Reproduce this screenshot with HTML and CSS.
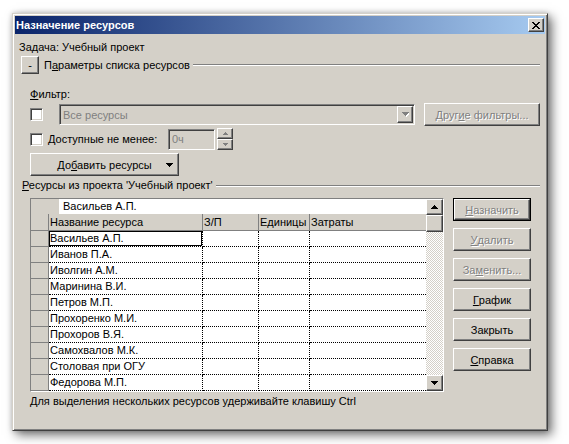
FILE: index.html
```html
<!DOCTYPE html>
<html lang="ru">
<head>
<meta charset="utf-8">
<title>Назначение ресурсов</title>
<link rel="stylesheet" href="styles.css">
</head>
<body>
<div class="stage">
  <div class="window">
    <div class="titlebar">
      <span class="title">Назначение ресурсов</span>
      <span class="close raised">
        <svg width="8" height="7" viewBox="0 0 8 7" shape-rendering="crispEdges"><path fill="#000" d="M0 0h2v1H0z M6 0h2v1H6z M1 1h2v1H1z M5 1h2v1H5z M2 2h4v1H2z M3 3h2v1H3z M2 4h4v1H2z M1 5h2v1H1z M5 5h2v1H5z M0 6h2v1H0z M6 6h2v1H6z"/></svg>
      </span>
    </div>
    <div class="client">
      <div class="task">Задача: Учебный проект</div>

      <div class="params">
        <div class="raised minus">-</div>
        <span class="plabel">П<u>а</u>раметры списка ресурсов</span>
        <span class="groove"></span>
      </div>

      <div class="flabel"><u>Ф</u>ильтр:</div>

      <div class="filter">
        <span class="chk"></span>
        <div class="combo sunken">
          <span class="ctext">Все ресурсы</span>
          <span class="cbtn raised">
            <svg width="7" height="5" viewBox="0 0 7 5" shape-rendering="crispEdges"><path fill="#fff" d="M1 1h7v1H1z M2 2h5v1H2z M3 3h3v1H3z M4 4h1v1H4z"/><path fill="#808080" d="M0 0h7v1H0z M1 1h5v1H1z M2 2h3v1H2z M3 3h1v1H3z"/></svg>
          </span>
        </div>
        <div class="raised btn dis other">Друг<u>и</u>е фильтры...</div>
      </div>

      <div class="avail">
        <span class="chk"></span>
        <span class="alabel"><u>Д</u>оступные не менее:</span>
        <span class="hours sunken">0ч</span>
        <span class="spin">
          <span class="sp raised"><svg width="5" height="3" viewBox="0 0 5 3" shape-rendering="crispEdges"><path fill="#808080" d="M2 0h1v1H2z M1 1h3v1H1z M0 2h5v1H0z"/></svg></span>
          <span class="sp raised"><svg width="5" height="3" viewBox="0 0 5 3" shape-rendering="crispEdges"><path fill="#808080" d="M0 0h5v1H0z M1 1h3v1H1z M2 2h1v1H2z"/></svg></span>
        </span>
      </div>

      <div class="raised addbtn">
        <span></span>
        <span class="addtext">До<u>б</u>авить ресурсы</span>
        <span class="addarrow"><svg width="7" height="4" viewBox="0 0 7 4" shape-rendering="crispEdges"><path fill="#000" d="M0 0h7v1H0z M1 1h5v1H1z M2 2h3v1H2z M3 3h1v1H3z"/></svg></span>
      </div>

      <div class="reslabel">
        <span><u>Р</u>есурсы из проекта 'Учебный проект'</span>
        <span class="groove"></span>
      </div>

      <div class="main">
        <div class="grid">
          <div class="table">
            <div class="editrow"><span class="egrey"></span><span class="efield">Васильев А.П.</span></div>
            <div class="hrow">
              <span class="rh"></span><span class="hc">Название ресурса</span><span class="hc">З/П</span><span class="hc">Единицы</span><span class="hc last">Затраты</span>
            </div>
            <div class="drow"><span class="rh"></span><span class="dc sel">Васильев А.П.</span><span class="dc"></span><span class="dc"></span><span class="dc last"></span></div>
            <div class="drow"><span class="rh"></span><span class="dc">Иванов П.А.</span><span class="dc"></span><span class="dc"></span><span class="dc last"></span></div>
            <div class="drow"><span class="rh"></span><span class="dc">Иволгин А.М.</span><span class="dc"></span><span class="dc"></span><span class="dc last"></span></div>
            <div class="drow"><span class="rh"></span><span class="dc">Маринина В.И.</span><span class="dc"></span><span class="dc"></span><span class="dc last"></span></div>
            <div class="drow"><span class="rh"></span><span class="dc">Петров М.П.</span><span class="dc"></span><span class="dc"></span><span class="dc last"></span></div>
            <div class="drow"><span class="rh"></span><span class="dc">Прохоренко М.И.</span><span class="dc"></span><span class="dc"></span><span class="dc last"></span></div>
            <div class="drow"><span class="rh"></span><span class="dc">Прохоров В.Я.</span><span class="dc"></span><span class="dc"></span><span class="dc last"></span></div>
            <div class="drow"><span class="rh"></span><span class="dc">Самохвалов М.К.</span><span class="dc"></span><span class="dc"></span><span class="dc last"></span></div>
            <div class="drow"><span class="rh"></span><span class="dc">Столовая при ОГУ</span><span class="dc"></span><span class="dc"></span><span class="dc last"></span></div>
            <div class="drow"><span class="rh"></span><span class="dc">Федорова М.П.</span><span class="dc"></span><span class="dc"></span><span class="dc last"></span></div>
          </div>
          <div class="vscroll">
            <span class="sbtn raised"><svg width="7" height="4" viewBox="0 0 7 4" shape-rendering="crispEdges"><path fill="#000" d="M3 0h1v1H3z M2 1h3v1H2z M1 2h5v1H1z M0 3h7v1H0z"/></svg></span>
            <span class="thumb raised"></span>
            <span class="track"></span>
            <span class="sbtn raised"><svg width="7" height="4" viewBox="0 0 7 4" shape-rendering="crispEdges"><path fill="#000" d="M0 0h7v1H0z M1 1h5v1H1z M2 2h3v1H2z M3 3h1v1H3z"/></svg></span>
          </div>
        </div>
        <div class="side">
          <div class="defbtn"><div class="raised btn dis"><u>Н</u>азначить</div></div>
          <div class="raised btn dis"><u>У</u>далить</div>
          <div class="raised btn dis">За<u>м</u>енить...</div>
          <div class="raised btn"><u>Г</u>рафик</div>
          <div class="raised btn">Закрыть</div>
          <div class="raised btn"><u>С</u>правка</div>
        </div>
      </div>

      <div class="hint">Для выделения нескольких ресурсов удерживайте клавишу Ctrl</div>
    </div>
  </div>
</div>
</body>
</html>
```
FILE: styles.css
```css
* { box-sizing: border-box; }
html, body { margin: 0; padding: 0; }
body {
  background: #fff;
  width: 569px;
  height: 444px;
  overflow: hidden;
  font-family: "Liberation Sans", Arial, sans-serif;
  font-size: 11px;
  color: #000;
}
u { text-decoration: underline; text-underline-offset: 1px; }

.stage { padding: 13px 0 0 12px; }

.window {
  width: 536px;
  height: 418px;
  background: #d4d0c8;
  border: 1px solid;
  border-color: #d4d0c8 #404040 #404040 #d4d0c8;
  padding: 2px;
  box-shadow: inset 1px 1px 0 #fff, inset -1px -1px 0 #808080,
              4px 4px 10px rgba(0,0,0,.55), 0 0 5px rgba(0,0,0,.18);
}

.raised {
  background: #d4d0c8;
  border: 1px solid;
  border-color: #fff #404040 #404040 #fff;
  box-shadow: inset -1px -1px 0 #808080, inset 1px 1px 0 #d4d0c8;
}
.sunken {
  border: 1px solid;
  border-color: #808080 #fff #fff #808080;
  box-shadow: inset 1px 1px 0 #404040, inset -1px -1px 0 #d4d0c8;
}

.titlebar {
  height: 18px;
  background: linear-gradient(to right, #0a246a, #a6caf0);
  display: flex;
  align-items: center;
  justify-content: space-between;
  padding: 0 1px 0 1px;
}
.title { color: #fff; font-weight: bold; font-size: 11px; }
.close {
  width: 16px;
  height: 14px;
  display: flex;
  align-items: center;
  justify-content: center;
}

.task { margin: 7px 0 0 4px; height: 13px; line-height: 13px; }

.params {
  margin-top: 2px;
  height: 18px;
  display: flex;
  align-items: center;
}
.minus {
  margin-left: 6px;
  width: 18px;
  height: 18px;
  display: flex;
  align-items: center;
  justify-content: center;
  line-height: 1;
}
.plabel { margin-left: 5px; white-space: nowrap; }
.groove {
  flex: 1;
  height: 2px;
  border-top: 1px solid #808080;
  border-bottom: 1px solid #fff;
  margin: 0 5px 0 3px;
}

.flabel { margin: 14px 0 0 15px; height: 13px; line-height: 13px; }

.filter {
  margin-top: 2px;
  height: 23px;
  display: flex;
  align-items: center;
}
.chk {
  width: 13px;
  height: 13px;
  flex-shrink: 0;
  background: #fff;
  border: 1px solid;
  border-color: #808080 #fff #fff #808080;
  box-shadow: inset 1px 1px 0 #404040, inset -1px -1px 0 #d4d0c8;
  margin-left: 15px;
}
.combo {
  margin-left: 16px;
  width: 356px;
  height: 21px;
  background: #d4d0c8;
  display: flex;
  align-items: center;
  padding: 1px;
}
.ctext { flex: 1; color: #808080; padding-left: 2px; }
.cbtn {
  width: 16px;
  height: 17px;
  display: flex;
  align-items: center;
  justify-content: center;
}
.btn {
  display: flex;
  align-items: center;
  justify-content: center;
  height: 23px;
  white-space: nowrap;
}
.dis { color: #808080; text-shadow: 1px 1px 0 #fff; }
.other { margin-left: 9px; width: 116px; }

.avail {
  margin-top: 2px;
  height: 22px;
  display: flex;
  align-items: center;
}
.alabel { margin-left: 5px; width: 120px; flex-shrink: 0; white-space: nowrap; }
.hours {
  width: 47px;
  height: 21px;
  background: #d4d0c8;
  color: #808080;
  padding-left: 3px;
  line-height: 19px;
}
.spin {
  margin-left: 2px;
  width: 16px;
  height: 22px;
  display: flex;
  flex-direction: column;
}
.sp {
  flex: 1;
  display: flex;
  align-items: center;
  justify-content: center;
}

.addbtn {
  margin: 3px 0 0 15px;
  width: 149px;
  height: 23px;
  display: grid;
  grid-template-columns: 1fr auto 1fr;
  align-items: center;
}
.addtext { white-space: nowrap; }
.addarrow { justify-self: end; margin-right: 5px; display: flex; }

.reslabel {
  margin: 3px 0 0 7px;
  height: 13px;
  line-height: 13px;
  display: flex;
  align-items: center;
  white-space: nowrap;
}

.main {
  margin: 6px 0 0 15px;
  display: flex;
  gap: 9px;
}
.grid {
  width: 414px;
  height: 194px;
  border: 1px solid;
  border-color: #808080 #fff #fff #808080;
  display: flex;
}
.table { width: 395px; display: flex; flex-direction: column; }
.editrow { height: 15px; display: flex; background: #d4d0c8; }
.egrey { width: 28px; background: #d4d0c8; }
.efield { flex: 1; background: #fff; padding-left: 4px; line-height: 15px; }

.hrow, .drow {
  display: grid;
  grid-template-columns: 18px 154px 56px 51px 1fr;
  height: 16px;
}
.hrow { height: 17px; }
.rh {
  background: #d4d0c8;
  border-right: 1px solid #808080;
  border-bottom: 1px solid #808080;
}
.hc {
  background: #d4d0c8;
  border-right: 1px solid #808080;
  border-bottom: 1px solid #808080;
  padding-left: 1px;
  line-height: 16px;
  white-space: nowrap;
  overflow: hidden;
}
.dc {
  background: #fff;
  border-right: 1px dotted #000;
  border-bottom: 1px dotted #000;
  padding-left: 1px;
  line-height: 15px;
  white-space: nowrap;
  overflow: hidden;
}
.last { border-right: none; }
.sel { box-shadow: inset 1px 1px 0 #000, inset -1px -1px 0 #000; }

.vscroll { width: 17px; display: flex; flex-direction: column; }
.sbtn {
  height: 16px;
  display: flex;
  align-items: center;
  justify-content: center;
}
.thumb { height: 17px; }
.track {
  flex: 1;
  background: repeating-conic-gradient(#fff 0 25%, #d4d0c8 0 50%) 0 0 / 2px 2px;
}

.side { display: flex; flex-direction: column; gap: 7px; }
.side > .btn { width: 78px; }
.defbtn { width: 78px; height: 23px; border: 1px solid #000; }
.defbtn > .btn { width: 76px; height: 21px; }

.hint { margin: 3px 0 0 15px; height: 13px; line-height: 13px; white-space: nowrap; }
```
